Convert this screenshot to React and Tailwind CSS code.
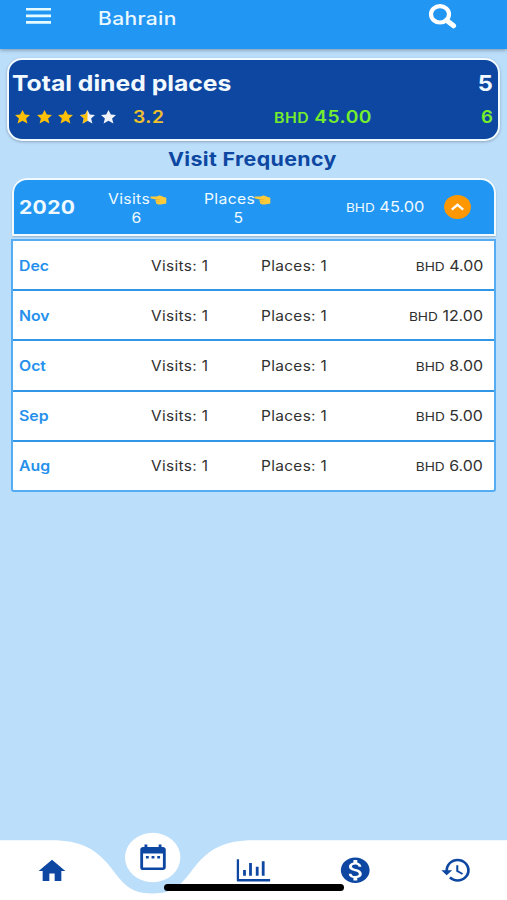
import React from "react";
import { MdHome, MdDateRange, MdMonetizationOn, MdHistory } from "react-icons/md";

const months = [
  ["Dec", "4.00"],
  ["Nov", "12.00"],
  ["Oct", "8.00"],
  ["Sep", "5.00"],
  ["Aug", "6.00"],
];

function Star({ fill }) {
  const points = "7.5,0 9.8,4.5 15,5 11.1,8.4 12.4,13.4 7.5,10.8 2.6,13.4 3.9,8.4 0,5 5.2,4.5";
  return (
    <svg className="h-[14px] w-[15px]" viewBox="0 0 15 14">
      <polygon points={points} fill={fill === "full" ? "#ffc107" : "#f1f3fb"} />
      {fill === "half" && (
        <polygon points="7.5,0 5.2,4.5 0,5 3.9,8.4 2.6,13.4 7.5,10.8" fill="#ffc107" />
      )}
    </svg>
  );
}

function Hand() {
  return (
    <svg className="mt-[2px] h-[10px] w-[17px] shrink-0" viewBox="0 0 17 10">
      <path d="M1 1.600h5.500L9.200.6C11 .5 12 1.900 16.300 2.700V8.600C13.500 9.500 9 9.700 7 8.900 5.900 8.500 5.700 7.500 6.100 6.900 5.300 6.300 5.200 5.300 5.900 4.600L1 3.500C.1 3.200.1 1.700 1 1.600z" fill="#fccb3c" />
      <path d="M6 4.600h3.500M6.300 6.900h3" stroke="#dea02c" strokeWidth=".6" />
    </svg>
  );
}

function Stat({ label, value, valueClass }) {
  return (
    <div className="mt-[2px] flex flex-col items-start text-[14.300px] leading-[19px]">
      <div className="flex h-[19px] items-center">
        <span className="-ml-px mr-[4px] inline-block origin-left scale-x-[1.1] tracking-[0.3px]">{label}</span>
        <Hand />
      </div>
      <span className={valueClass}>
        <span className="inline-block scale-x-[1.1]">{value}</span>
      </span>
    </div>
  );
}

export default function App() {
  return (
    <div className="flex h-[900px] w-[507px] flex-col overflow-hidden bg-[#bbdefb] font-['Inter',sans-serif]">
      <header className="z-10 flex h-[49px] shrink-0 items-start bg-[#2196f3] text-[#eaf8ff] shadow-[0_1px_4px_rgba(0,0,0,0.35)]">
        <svg className="ml-[26px] mt-[8px] h-4 w-[25px]" viewBox="0 0 25 16">
          <path d="M0 1.200h25M0 7.900h25M0 14.400h25" stroke="#e6fbff" strokeWidth="2.600" />
        </svg>
        <h1 className="ml-[47px] mt-[6px] origin-left scale-x-[1.15] text-[18.300px] font-medium leading-6 tracking-[0.3px]">Bahrain</h1>
        <svg className="ml-auto mr-[50px] mt-[3px] h-[27px] w-[29px]" viewBox="0 0 29 27">
          <ellipse cx="12" cy="11.300" rx="9" ry="8.200" fill="none" stroke="#fff" strokeWidth="4.200" />
          <path d="M18.500 17.200L25.600 22.800" stroke="#fff" strokeWidth="5" strokeLinecap="round" />
        </svg>
      </header>

      <section className="mx-[7px] mt-[9px] flex h-[83px] shrink-0 flex-col rounded-[15px] border-2 border-[#f1faff] bg-[#0d47a1] pl-1 pr-[5px] shadow-[0_1px_3px_rgba(0,0,0,0.25)]">
        <div className="mt-[9px] flex h-7 items-center justify-between text-[21.500px] font-bold text-[#f2f9ff]">
          <span className="-ml-px origin-left scale-x-[1.15]">Total dined places</span>
          <span className="origin-right scale-x-[1.1]">5</span>
        </div>
        <div className="mt-[11px] flex h-5 items-center text-[17px] font-semibold">
          <div className="-mt-[3px] ml-[2px] flex gap-[6.600px]">
            <Star fill="full" />
            <Star fill="full" />
            <Star fill="full" />
            <Star fill="half" />
            <Star fill="none" />
          </div>
          <span className="ml-[17px] w-[141px] origin-left scale-x-[1.13] tracking-[0.5px] text-[#eec02d]">3.2</span>
          <span className="origin-left scale-x-[1.13] whitespace-nowrap tracking-[0.4px] text-[#76ee2c]"><span className="text-[14px]">BHD</span> 45.00</span>
          <span className="ml-auto origin-right scale-x-[1.1] text-[#76ee2c]">6</span>
        </div>
      </section>

      <h2 className="mt-[7px] h-6 shrink-0 scale-x-[1.14] pr-[2px] text-center text-[18.800px] font-bold leading-6 tracking-[0.3px] text-[#0d47a1]">Visit Frequency</h2>

      <section className="ml-[12px] mr-[11px] mt-[6px] flex h-[58px] shrink-0 items-center rounded-t-[15px] border-2 border-[#f0faff] bg-[#2196f3] pl-[5px] text-[#eefaff] shadow-[0_1px_2px_rgba(0,0,0,0.2)]">
        <span className="mt-[2px] w-[90px] text-[19px] font-bold"><span className="inline-block origin-left scale-x-[1.11] tracking-[0.3px]">2020</span></span>
        <div className="w-[96px]"><Stat label="Visits" value="6" valueClass="w-[55px] text-center" /></div>
        <div className="w-[141px]"><Stat label="Places" value="5" valueClass="w-[66px] text-center" /></div>
        <span className="origin-left scale-x-[1.13] whitespace-nowrap text-[14.500px]"><span className="text-[12px]">BHD</span> 45.00</span>
        <svg className="ml-auto mr-[23px] h-6 w-[27px]" viewBox="0 0 27 24">
          <ellipse cx="13.500" cy="12" rx="13.400" ry="12" fill="#ff9800" />
          <path d="M7.800 14.600L13.500 9.800l5.700 4.800" fill="none" stroke="#fff" strokeWidth="2.300" />
        </svg>
      </section>

      <section className="mx-[11px] mt-[3px] flex h-[253px] shrink-0 flex-col divide-y-2 divide-[#3296e6] rounded-b-[3px] border-2 border-[#56acf2] bg-white text-[14px] text-[#303030]">
        {months.map(([month, amount]) => (
          <div key={month} className="flex flex-1 items-center pl-[6px] pr-[11px]">
            <div className="w-[132px]"><span className="inline-block origin-left scale-x-[1.13] font-semibold text-[#2590ec]">{month}</span></div>
            <div className="w-[110px]"><span className="inline-block origin-left scale-x-[1.1] tracking-[0.3px]">Visits: 1</span></div>
            <div><span className="inline-block origin-left scale-x-[1.1] tracking-[0.3px]">Places: 1</span></div>
            <span className="ml-auto origin-right scale-x-[1.14]"><span className="text-[12px]">BHD</span> {amount}</span>
          </div>
        ))}
      </section>

      <nav className="relative mt-auto h-[68px] shrink-0 text-[#0d47a1]">
        <svg className="absolute bottom-0 left-0 h-[68px] w-[507px]" viewBox="0 0 507 68">
          <path d="M0 8.300H52C80 8.300 95 17 108 32C121 48 127 61.500 152.500 61.500C178 61.500 184 48 197 32C210 17 225 8.300 253 8.300H507V68H0Z" fill="#fff" />
          <ellipse cx="152.700" cy="25.500" rx="27.700" ry="24.700" fill="#fff" />
        </svg>
        <div className="relative grid h-full grid-cols-5 justify-items-center">
          <MdHome className="mt-[23.500px] h-[30px] w-[32px] translate-x-[1px]" preserveAspectRatio="none" />
          <MdDateRange className="mt-[10px] h-[30.500px] w-[34px] translate-x-[1px]" preserveAspectRatio="none" />
          <svg className="mt-[27px] h-[24px] w-[34px] translate-x-[0.500px]" viewBox="0 0 34 24" fill="none" stroke="#0d47a1">
            <path d="M1.300 .3V21.300H33.700" strokeWidth="2.500" strokeLinejoin="round" />
            <path d="M8 11V16.700M14 4V16.700M20.700 7.700V16.700M26.700 2.300V16.700" strokeWidth="2.800" />
          </svg>
          <MdMonetizationOn className="mt-[23px] h-[30.500px] w-[34.500px]" preserveAspectRatio="none" />
          <MdHistory className="mt-[23px] h-[30.500px] w-[32.500px]" preserveAspectRatio="none" />
        </div>
        <div className="absolute bottom-[9.500px] left-[164px] h-[6.500px] w-[180px] rounded-full bg-black" />
      </nav>
    </div>
  );
}
